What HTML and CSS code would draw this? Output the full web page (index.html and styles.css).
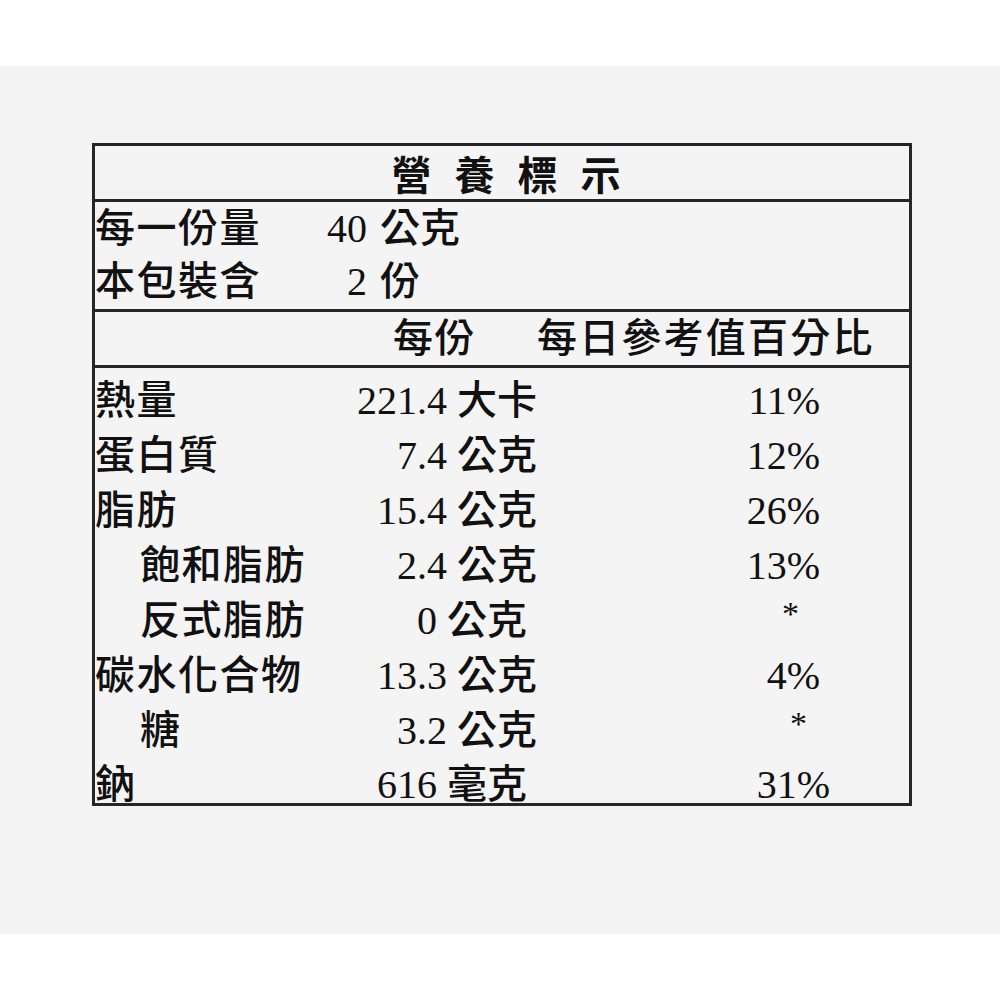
FILE: index.html
```html
<!DOCTYPE html>
<html lang="zh-Hant">
<head>
<meta charset="utf-8">
<title>營養標示</title>
<link rel="stylesheet" href="styles.css">
</head>
<body>
<div class="band">
  <div class="facts">
    <div class="title">營養標示</div>
    <div class="serving">
      <div class="srow"><span class="slabel">每一份量</span><span class="snum">40</span><span class="sunit">公克</span></div>
      <div class="srow"><span class="slabel">本包裝含</span><span class="snum">2</span><span class="sunit">份</span></div>
    </div>
    <div class="head"><span class="h-per">每份</span><span class="h-dv">每日參考值百分比</span></div>
    <div class="data">
      <div class="row"><span class="label">熱量</span><span class="amt">221.4 大卡</span><span class="pct">11%</span></div>
      <div class="row"><span class="label">蛋白質</span><span class="amt">7.4 公克</span><span class="pct">12%</span></div>
      <div class="row"><span class="label">脂肪</span><span class="amt">15.4 公克</span><span class="pct">26%</span></div>
      <div class="row"><span class="label sub">飽和脂肪</span><span class="amt">2.4 公克</span><span class="pct">13%</span></div>
      <div class="row"><span class="label sub">反式脂肪</span><span class="amt short">0 公克</span><span class="pct star-a"><span class="star">*</span></span></div>
      <div class="row"><span class="label">碳水化合物</span><span class="amt">13.3 公克</span><span class="pct">4%</span></div>
      <div class="row"><span class="label sub">糖</span><span class="amt">3.2 公克</span><span class="pct star-b"><span class="star">*</span></span></div>
      <div class="row"><span class="label">鈉</span><span class="amt short">616 毫克</span><span class="pct"><span class="wide">31%</span></span></div>
    </div>
  </div>
</div>
</body>
</html>
```
FILE: styles.css
```css
* {
  box-sizing: border-box;
}

body {
  margin: 0;
  background: #ffffff;
  font-family: "Liberation Serif", "Noto Sans CJK TC", serif;
  font-size: 40px;
  font-weight: 500;
  color: #111111;
}

.band {
  margin-top: 66px;
  height: 868px;
  background: #f4f4f4;
  padding-top: 77px;
  overflow: hidden;
}

.facts {
  margin-left: 92px;
  width: 820px;
  border: 3px solid #262626;
}

.title {
  height: 56px;
  border-bottom: 3px solid #262626;
  display: flex;
  align-items: center;
  justify-content: center;
  font-family: "Noto Sans CJK TC", sans-serif;
  font-size: 40px;
  font-weight: 700;
  letter-spacing: 23px;
  padding-left: 31px;
  line-height: 1;
}

.serving {
  height: 110px;
  border-bottom: 3px solid #262626;
}

.srow {
  height: 53.5px;
  display: flex;
  align-items: center;
  line-height: 1;
  white-space: nowrap;
}

.slabel {
  width: 230px;
  letter-spacing: 1.5px;
}

.snum {
  width: 42px;
  text-align: right;
}

.sunit {
  margin-left: 13px;
}

.head {
  height: 56px;
  border-bottom: 3px solid #262626;
  display: flex;
  align-items: center;
  padding-left: 298px;
  line-height: 1;
  letter-spacing: 1.5px;
  white-space: nowrap;
}

.h-dv {
  margin-left: 61px;
  letter-spacing: 2.2px;
}

.data {
  height: 435px;
  padding-top: 6px;
}

.row {
  display: grid;
  grid-template-columns: 245px 197px 283px;
  height: 54.86px;
  align-items: center;
  line-height: 1;
  white-space: nowrap;
}

.label {
  letter-spacing: 1.5px;
}

.label.sub {
  padding-left: 45px;
}

.amt {
  text-align: right;
}

.amt.short {
  padding-right: 10px;
}

.pct {
  text-align: right;
}

.star {
  display: inline-block;
  font-size: 34px;
  transform: translateY(-9px);
}

.star-a {
  padding-right: 21px;
}

.star-b {
  padding-right: 13px;
}

.wide {
  margin-right: -10px;
}
```
